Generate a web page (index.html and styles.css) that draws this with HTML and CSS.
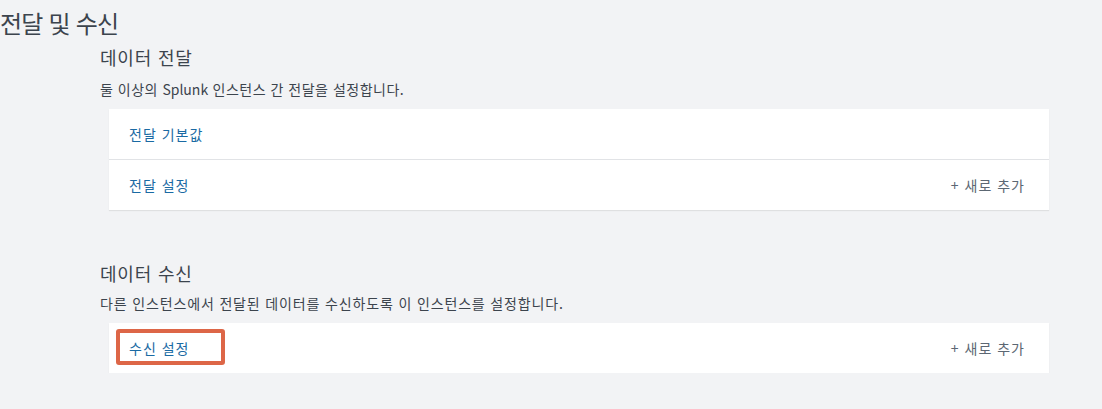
FILE: index.html
```html
<!DOCTYPE html>
<html lang="ko">
<head>
<meta charset="utf-8">
<link rel="stylesheet" href="styles.css">
</head>
<body>
<h1 class="page-title">전달 및 수신</h1>
<section class="section section-first">
  <h2 class="section-title">데이터 전달</h2>
  <p class="section-desc">둘 이상의 <span class="latin">Splunk</span> 인스턴스 간 전달을 설정합니다.</p>
  <div class="card">
    <div class="row"><a class="row-link">전달 기본값</a></div>
    <div class="row"><a class="row-link">전달 설정</a><a class="add-new">+ 새로 추가</a></div>
  </div>
</section>
<section class="section section-second">
  <h2 class="section-title">데이터 수신</h2>
  <p class="section-desc">다른 인스턴스에서 전달된 데이터를 수신하도록 이 인스턴스를 설정합니다.</p>
  <div class="card">
    <div class="row row-highlighted"><a class="row-link">수신 설정</a><a class="add-new">+ 새로 추가</a></div>
  </div>
</section>
</body>
</html>
```

FILE: styles.css
```css
html, body {
  margin: 0;
  padding: 0;
  background: #f2f3f5;
  font-family: "Noto Sans CJK KR", "Noto Sans", sans-serif;
  color: #3c444d;
}
.page-title {
  margin: 0;
  padding-top: 7px;
  font-size: 24px;
  line-height: 32px;
  font-weight: 400;
  letter-spacing: -0.8px;
}
.section {
  padding-left: 100px;
}
.section-title {
  margin: 6px 0 0;
  font-size: 18px;
  line-height: 24px;
  font-weight: 400;
  letter-spacing: 0.8px;
}
.section-second .section-title {
  margin-top: 51px;
}
.section-desc {
  margin: 10px 0 10px;
  font-size: 14px;
  line-height: 20px;
  letter-spacing: 0.5px;
}
.section-second .section-desc {
  margin-top: 8px;
  letter-spacing: 0.85px;
}
.latin {
  letter-spacing: 0;
}
.card {
  margin-left: 9px;
  width: 940px;
  background: #fff;
  box-shadow: 0 1px 1px rgba(0, 0, 0, 0.08);
}
.row {
  height: 50px;
  display: flex;
  align-items: center;
  justify-content: space-between;
  padding: 0 24px 0 20px;
  font-size: 14px;
  letter-spacing: 1px;
  position: relative;
}
.row + .row {
  border-top: 1px solid #e1e3e6;
}
.row-link {
  color: #1a6aa3;
}
.add-new {
  color: #5c6773;
}
.row-highlighted::after {
  content: "";
  position: absolute;
  left: 7px;
  top: 6px;
  width: 109px;
  height: 36px;
  box-sizing: border-box;
  border: 4px solid #dd6647;
  border-radius: 3px;
}
```
